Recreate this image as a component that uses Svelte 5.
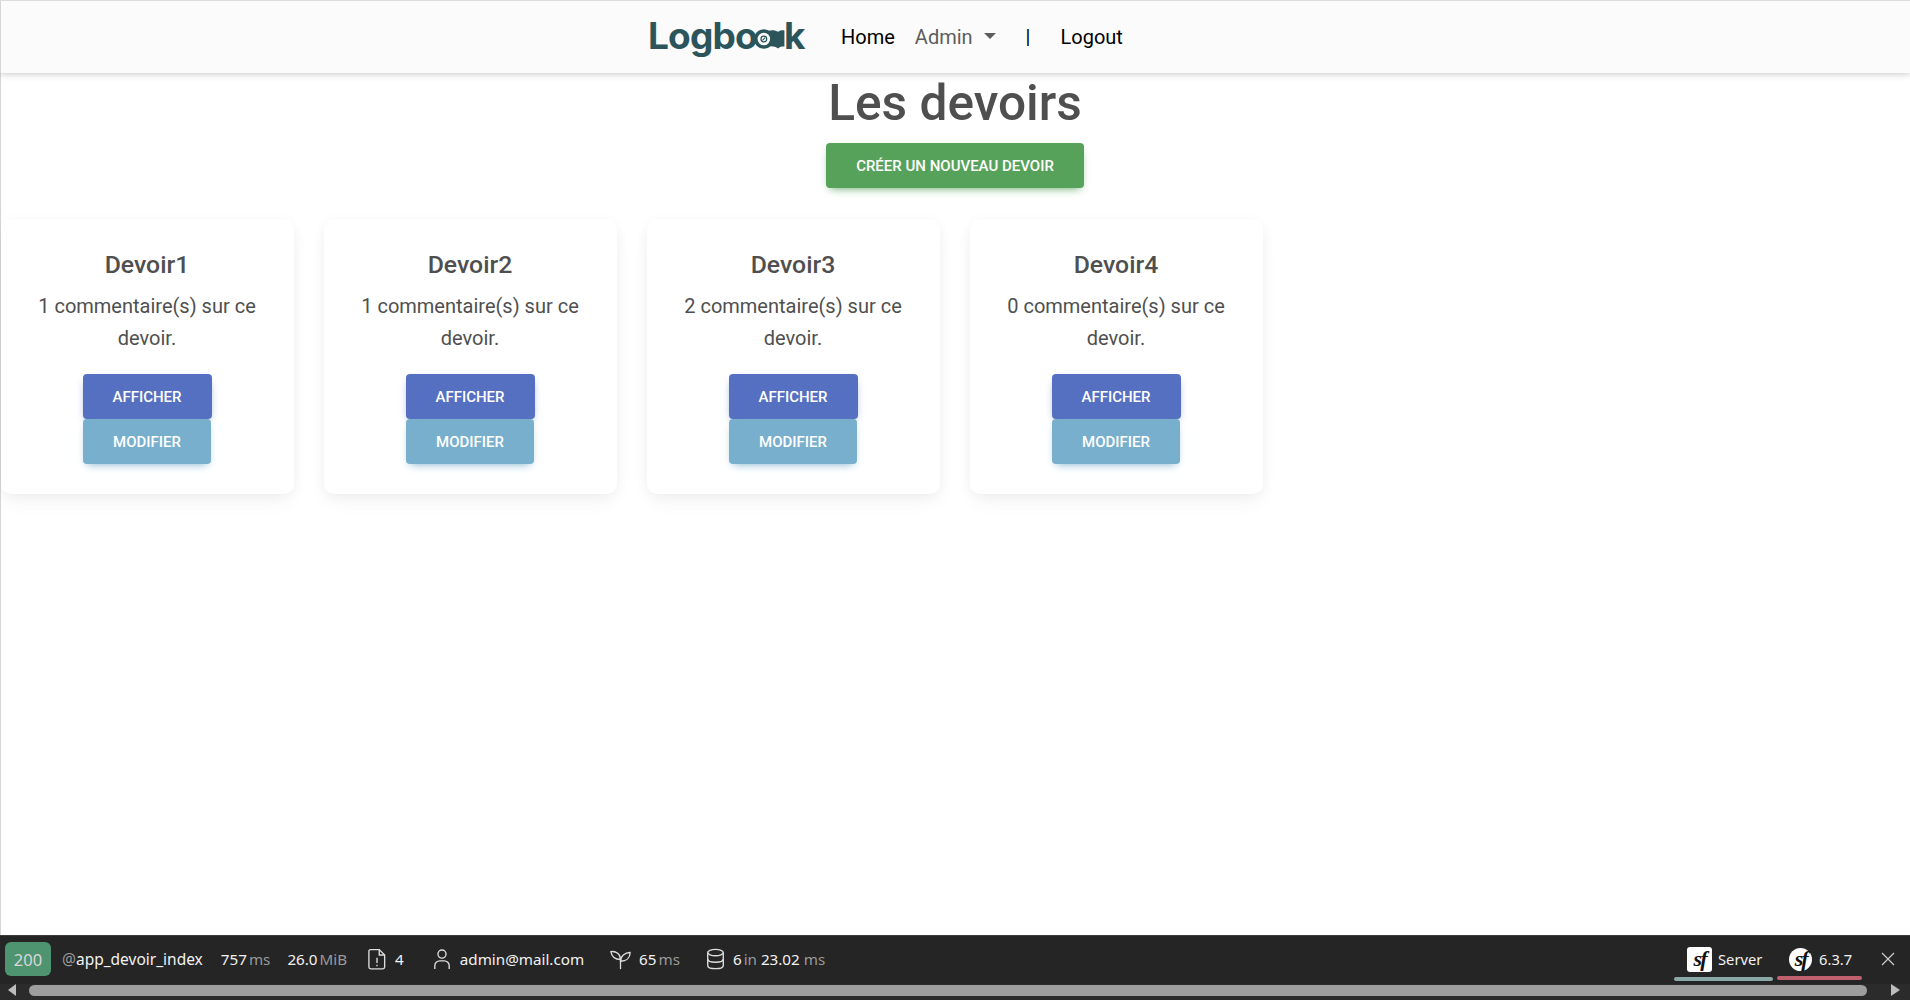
<script>
  const devoirs = [
    { name: 'Devoir1', count: 1 },
    { name: 'Devoir2', count: 1 },
    { name: 'Devoir3', count: 2 },
    { name: 'Devoir4', count: 0 }
  ];
</script>

<div class="page">
  <nav class="nav">
    <a class="logo" href="#top">Logbo<svg class="logo-icon" viewBox="0 0 38 24" width="34" height="22" aria-hidden="true">
        <circle cx="11" cy="12" r="9" fill="none" stroke="#2b555b" stroke-width="4"/>
        <circle cx="11" cy="12" r="3.2" fill="none" stroke="#2b555b" stroke-width="1.4"/>
        <path d="M9.5 13.5l3-3" stroke="#2b555b" stroke-width="1.2"/>
        <path d="M15 3c5-1.500 9-1 12 1 3-2 5-2 7-1.500v18c-3-.5-5 0-7 2-3-2-7-3-12-2 4-3 6-6 6-9s-2-6-6-8.500z" fill="#2b555b"/>
      </svg>k</a>
    <ul class="menu">
      <li><a href="#top" class="link">Home</a></li>
      <li><a href="#top" class="link muted">Admin<span class="caret"></span></a></li>
      <li class="sep">|</li>
      <li><a href="#top" class="link">Logout</a></li>
    </ul>
  </nav>

  <main class="main">
    <h1>Les devoirs</h1>
    <button class="btn green create">Créer un nouveau devoir</button>
    <div class="cards">
      {#each devoirs as d}
        <article class="card">
          <h2>{d.name}</h2>
          <p>{d.count} commentaire(s) sur ce devoir.</p>
          <div class="actions">
            <button class="btn blue">Afficher</button>
            <button class="btn cyan">Modifier</button>
          </div>
        </article>
      {/each}
    </div>
  </main>

  <footer class="toolbar">
    <div class="bar">
      <span class="status">200</span>
      <span class="item route"><span class="dim">@</span>app_devoir_index</span>
      <span class="item t757">757<span class="dim u">ms</span></span>
      <span class="item t26">26.0<span class="dim u">MiB</span></span>
      <span class="item logs">
        <svg viewBox="0 0 20 24" width="18" height="22" fill="none" stroke="#ddd" stroke-width="1.500" aria-hidden="true"><path d="M3 1.500h9.500l6 6v13.500a2 2 0 0 1-2 2h-13.500a2 2 0 0 1-2-2v-17.500a2 2 0 0 1 2-2z"/><path d="M12.500 1.500v6h6"/><path d="M10 10.500v6M10 18.500v1.500"/></svg>
        <span class="n">4</span>
      </span>
      <span class="item user">
        <svg viewBox="0 0 20 24" width="18" height="22" fill="none" stroke="#ddd" stroke-width="1.500" aria-hidden="true"><circle cx="10" cy="6.500" r="4.500"/><path d="M2 23v-3.500a5.500 5.500 0 0 1 5.500-5.500h5a5.500 5.500 0 0 1 5.500 5.500v3.500"/></svg>
        <span>admin@mail.com</span>
      </span>
      <span class="item twig">
        <svg viewBox="0 0 24 24" width="21" height="21" fill="none" stroke="#ddd" stroke-width="1.500" aria-hidden="true"><path d="M12 23v-11"/><path d="M12 12c-6 0-10-3-11-9 6-1 11 3 11 9z"/><path d="M12 14c0-6 5-10 11-10 0 6-4 10-11 10z"/></svg>
        <span>65<span class="dim u">ms</span></span>
      </span>
      <span class="item db">
        <svg viewBox="0 0 20 24" width="19" height="22" fill="none" stroke="#ddd" stroke-width="1.500" aria-hidden="true"><ellipse cx="10" cy="5" rx="8.500" ry="3.500"/><path d="M1.500 5v14c0 2 3.800 3.500 8.500 3.500s8.500-1.500 8.500-3.500v-14"/><path d="M1.500 12c0 2 3.800 3.500 8.500 3.500s8.500-1.500 8.500-3.500"/></svg>
        <span>6<span class="dim u in">in</span> 23.02<span class="dim u ms2">ms</span></span>
      </span>
      <span class="spacer"></span>
      <span class="item server">
        <span class="sf square">sf</span>Server
        <i class="under teal"></i>
      </span>
      <span class="item version">
        <span class="sf round">sf</span>6.3.7
        <i class="under red"></i>
      </span>
      <svg class="close" viewBox="0 0 14 14" width="14" height="14" fill="none" stroke="#ccc" stroke-width="1.200" aria-hidden="true"><path d="M1 1l12 12M13 1l-12 12"/></svg>
    </div>
    <div class="scroll">
      <span class="arrow left"></span>
      <span class="thumb"></span>
      <span class="arrow right"></span>
    </div>
  </footer>
</div>

<style>
  :global(body) {
    margin: 0;
    background: #fff;
    font-family: Roboto, sans-serif;
    color: #4f4f4f;
  }
  .page {
    height: 1000px;
    display: flex;
    flex-direction: column;
    overflow: hidden;
    box-sizing: border-box;
    box-shadow: inset 1px 0 #d6d6d6;
    border-top: 1px solid #dcdcdc;
  }
  .nav {
    height: 72px;
    flex: none;
    background: #fbfbfb;
    box-shadow: inset 1px 0 #d6d6d6, 0 2px 5px rgba(0, 0, 0, 0.12), 0 2px 10px rgba(0, 0, 0, 0.06);
    display: flex;
    align-items: center;
    padding-left: 648px;
    position: relative;
    z-index: 2;
  }
  .logo {
    font-family: Inter, sans-serif;
    font-weight: 700;
    font-size: 37px;
    letter-spacing: -0.8px;
    color: #2b555b;
    text-decoration: none;
    display: flex;
    align-items: center;
    width: 159px;
    line-height: 1;
    margin-top: -3px;
  }
  .logo-icon {
    margin: 6px -4px 0 -3px;
    flex: none;
  }
  .menu {
    list-style: none;
    display: flex;
    align-items: center;
    margin: 0 0 0 34px;
    padding: 0;
    font-size: 20px;
  }
  .link {
    color: #000;
    text-decoration: none;
  }
  .link.muted {
    color: #5d5d5d;
    display: flex;
    align-items: center;
    margin-left: 20px;
  }
  .caret {
    width: 0;
    height: 0;
    margin-left: 11px;
    border-left: 6px solid transparent;
    border-right: 6px solid transparent;
    border-top: 6px solid #5d5d5d;
    margin-top: -3px;
  }
  .sep {
    color: #000;
    margin: 0 30px;
  }
  .main {
    flex: 1;
    display: flex;
    flex-direction: column;
    align-items: center;
    min-height: 0;
  }
  h1 {
    font-size: 49.6px;
    font-weight: 500;
    line-height: 57px;
    margin: 2px 0 11px;
    color: #4f4f4f;
  }
  .btn {
    border: 0;
    border-radius: 4px;
    color: #fff;
    font-family: Roboto, sans-serif;
    font-weight: 500;
    font-size: 15px;
    line-height: 20px;
    text-transform: uppercase;
    height: 45px;
    padding: 0 30px;
    box-shadow: 0 4px 9px -4px rgba(0, 0, 0, 0.3);
  }
  .green {
    background: #57a25b;
    box-shadow: 0 4px 9px -4px #57a25b;
  }
  .create {
    width: 258px;
    padding: 0;
  }
  .blue {
    background: #5570c0;
    box-shadow: 0 4px 9px -4px #5570c0;
    width: 129px;
    padding: 0;
  }
  .cyan {
    background: #78afcd;
    box-shadow: 0 4px 9px -4px #78afcd;
    width: 128px;
    padding: 0;
  }
  .cards {
    align-self: flex-start;
    display: grid;
    grid-template-columns: repeat(4, 293px);
    column-gap: 30px;
    margin: 31px 0 0 0.500px;
  }
  .card {
    background: #fff;
    border-radius: 10px;
    height: 275px;
    box-sizing: border-box;
    padding: 31px 24px 0;
    text-align: center;
    box-shadow: 0 2px 15px -3px rgba(0, 0, 0, 0.07), 0 10px 20px -2px rgba(0, 0, 0, 0.04);
    display: flex;
    flex-direction: column;
    align-items: center;
  }
  h2 {
    font-size: 24.8px;
    font-weight: 500;
    line-height: 29px;
    margin: 0 0 11px;
    color: #4f4f4f;
  }
  .card p {
    font-size: 20px;
    line-height: 32px;
    margin: 0 0 20px;
    color: #4f4f4f;
  }
  .actions {
    display: flex;
    flex-direction: column;
    align-items: center;
  }
  .toolbar {
    flex: none;
    height: 65px;
    background: #252525;
    border-top: 1px solid #3a3a3a;
    color: #f2f2f2;
    font-family: "Noto Sans", sans-serif;
    font-size: 15.200px;
    display: flex;
    flex-direction: column;
    box-sizing: border-box;
  }
  .bar {
    height: 48px;
    box-sizing: border-box;
    display: flex;
    align-items: center;
    padding: 0 15px 2px 5px;
    position: relative;
  }
  .status {
    width: 46px;
    height: 34px;
    background: #4f9470;
    border-radius: 6px;
    color: #d8d8d8;
    display: flex;
    align-items: center;
    justify-content: center;
    font-size: 16.500px;
    flex: none;
  }
  .item {
    display: flex;
    align-items: center;
    white-space: pre;
    position: relative;
  }
  .dim {
    color: #9a9a9a;
  }
  .u {
    margin-left: 2px;
  }
  .route {
    margin-left: 11px;
    font-size: 15.500px;
  }
  .t757 {
    margin-left: 18px;
  }
  .t26 {
    margin-left: 17px;
  }
  .logs {
    margin-left: 21px;
  }
  .n {
    margin-left: 9px;
  }
  .user {
    margin-left: 29px;
  }
  .user svg {
    margin-right: 9px;
  }
  .twig {
    margin-left: 26px;
  }
  .twig svg {
    margin-right: 8px;
  }
  .db {
    margin-left: 26px;
  }
  .db svg {
    margin-right: 8px;
  }
  .ms2 {
    margin-left: 4px;
  }
  .spacer {
    flex: 1;
  }
  .sf {
    width: 25px;
    height: 25px;
    background: #fff;
    color: #111;
    font-family: "Liberation Serif", serif;
    font-style: italic;
    font-weight: 700;
    font-size: 22px;
    letter-spacing: -2px;
    display: flex;
    align-items: center;
    justify-content: center;
    margin-right: 6px;
  }
  .square {
    border-radius: 3px;
  }
  .round {
    border-radius: 50%;
    width: 23px;
    height: 23px;
    margin-right: 7px;
  }
  .server,
  .version {
    font-size: 14.700px;
  }
  .server {
    margin-right: 23px;
  }
  .version {
    margin-right: 25px;
  }
  .under {
    position: absolute;
    bottom: -9px;
    height: 4px;
    border-radius: 2px;
  }
  .teal {
    background: #8aa9a6;
    left: -13px;
    right: -7px;
  }
  .red {
    background: #c0606f;
    left: -12px;
    right: -6px;
  }
  .close {
    flex: none;
  }
  .scroll {
    flex: 1;
    position: relative;
    background: #2b2b2b;
    display: flex;
    align-items: center;
    padding: 0 10px 4px 8px;
  }
  .thumb {
    flex: 1;
    height: 11px;
    margin: 0 24px 0 13px;
    border-radius: 6px;
    background: #9e9e9e;
  }
  .arrow {
    width: 0;
    height: 0;
    border-top: 6px solid transparent;
    border-bottom: 6px solid transparent;
  }
  .left {
    border-right: 8px solid #bdbdbd;
  }
  .right {
    border-left: 9px solid #bdbdbd;
  }
</style>
